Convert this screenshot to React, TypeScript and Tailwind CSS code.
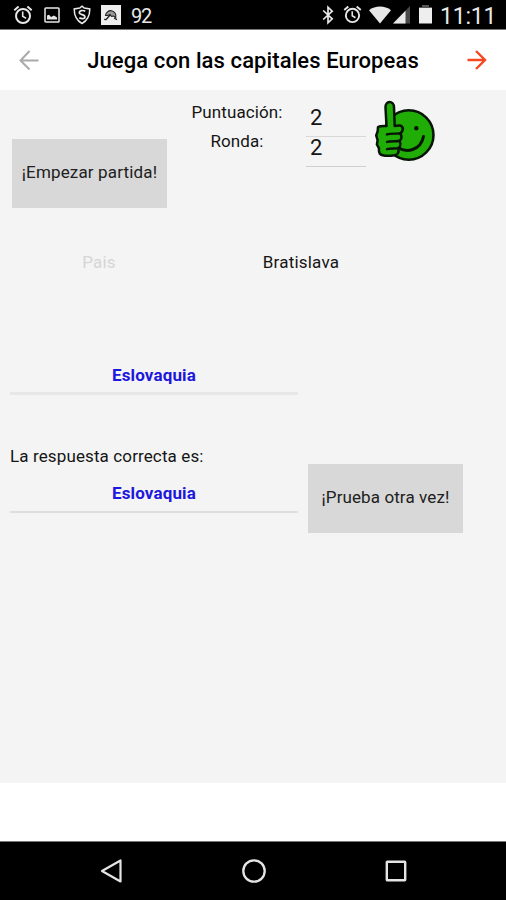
import type { ReactNode } from "react";

function AlarmIcon({ className }: { className: string }) {
  return (
    <svg viewBox="0 0 20 20" className={className} fill="none" stroke="currentColor">
      <circle cx="10" cy="11" r="7" strokeWidth="2" />
      <path d="M1.3 5.2 5.6 1.6M14.4 1.6l4.3 3.6" strokeWidth="2" />
      <path d="M9.7 6.5v4.8l3.4 2.1" strokeWidth="1.6" />
    </svg>
  );
}

function StatusBar() {
  return (
    <div className="flex h-[30px] items-center border-b border-[#777] bg-black text-[#e8e8e8]">
      <AlarmIcon className="ml-[13px] h-5 w-5 shrink-0" />
      <svg viewBox="0 0 16 16" className="ml-[11px] h-4 w-4 shrink-0" fill="none" stroke="currentColor">
        <rect x="1" y="1" width="14" height="14" rx="0.8" strokeWidth="1.5" />
        <path d="M3 12.5V8.5l2-.7 2 2.2 3-1.5 3 2v2z" fill="currentColor" stroke="none" />
      </svg>
      <svg viewBox="0 0 18 20" className="ml-[13px] h-5 w-[18px] shrink-0" fill="none" stroke="currentColor" strokeWidth="1.5">
        <path d="M9 1.2 11.3 3 16.8 4c0 6.8-2.3 11.5-7.8 14.5C3.5 15.5 1.2 10.8 1.2 4L6.7 3Z" />
        <path d="M12.3 6.3C9.5 4.8 6.3 5.6 6.3 7.5c0 2.5 5.7 1.8 5.7 4.4 0 1.9-3.2 2.4-5.7.8" strokeWidth="1.7" />
      </svg>
      <svg viewBox="0 0 20 20" className="ml-[10px] h-5 w-5 shrink-0">
        <rect width="20" height="20" fill="#eeeeee" />
        <path d="M4.5 10.5C4.8 7.5 7.5 5.3 10.5 5.7c3.3.5 5 3.8 4.3 7.1L12.6 11l-2 .4-1.8-1.7-2.1.8Z" fill="#999" stroke="#222" strokeWidth="1.1" />
        <path d="m9.5 9.5-4.2 4.7c-.7.8-1.7.4-1.6-.5M13 13l3 1.7" fill="none" stroke="#222" strokeWidth="1.3" />
      </svg>
      <span className="ml-[10px] pt-[2px] text-[20px] leading-[28px] tracking-[-1.3px]">92</span>

      <svg viewBox="0 0 12 20" className="ml-auto h-5 w-3 shrink-0" fill="none" stroke="currentColor" strokeWidth="1.7">
        <path d="m1.2 5.5 9 8.3-4.200 4V2.2l4.200 4-9 8.3" />
      </svg>
      <AlarmIcon className="ml-[9px] h-[19px] w-[19px] shrink-0" />
      <svg viewBox="0 0 22 18" className="ml-[7px] h-[18px] w-[22px] shrink-0" fill="currentColor">
        <path d="M0 4.200C6-.8 16-.8 22 4.200L11 17.5Z" />
      </svg>
      <svg viewBox="0 0 17 18" className="ml-[2px] h-[18px] w-[17px] shrink-0">
        <path d="M17 0v17.5H0Z" fill="#484848" />
        <path d="M12.500 4.7v12.800H0Z" fill="#e8e8e8" />
      </svg>
      <svg viewBox="0 0 13 19" className="ml-[9px] h-[19px] w-[13px] shrink-0">
        <path d="M3 0h7v2h3v5H0V2h3z" fill="#555" />
        <path d="M0 3h13v15.500H0z" fill="#eeeeee" />
      </svg>
      <span className="mr-[9px] ml-[8px] w-[57px] pt-[4px] text-[23px] leading-[26px] tracking-[-0.2px] whitespace-nowrap">11:11</span>
    </div>
  );
}

function ThumbSmiley() {
  return (
    <svg viewBox="0 0 62 62" className="mt-[10px] ml-[8px] h-[62px] w-[62px] shrink-0" fill="#20ad05" stroke="#071507" strokeLinecap="round" strokeLinejoin="round">
      <circle cx="34.8" cy="35" r="24.700" strokeWidth="2.500" />
      <circle cx="42.300" cy="28.300" r="2.200" fill="#071507" stroke="none" />
      <circle cx="28.300" cy="28.500" r="1.800" fill="#071507" stroke="none" />
      <path d="M24 47.500C32 53 46.500 51 49.500 36.500" fill="none" strokeWidth="3" />
      <path d="M12.500 26 11.500 7.500C11 .3 20 .3 20 7.500L20.700 26l4-.4c3.300-.1 4.100 1.600 4 3.700-.2 2.200-1.200 3.300-2.700 4 2.200 2.400 2 6-.6 7.600 1.700 2.800 1.100 5.800-1.200 7.400 1.200 4.300-.7 7.400-5.400 7.300-4.600.2-10.500 1-13-2-.9-1.400-1-3.400-.9-5.400L2.900 44.500l.7-4.300L2.200 35.500l1.500-4.300.3-4.200c2-1.200 5.300-1 8.500-1Z" strokeWidth="2.500" />
      <path d="M12.800 34.500c3.700-1.200 8.500-.6 13.200-1M13 41.900c3.700-1 8-.5 12.200-.9M13 49.200c3.500-1 7.200-.4 11-.8" fill="none" strokeWidth="2.400" />
    </svg>
  );
}

function GameButton({ className, children }: { className: string; children: ReactNode }) {
  return (
    <button className={`h-[69px] w-[155px] shrink-0 bg-[#d8d8d8] pb-px text-center whitespace-nowrap text-[#202020] ${className}`}>
      {children}
    </button>
  );
}

export default function App() {
  return (
    <div className="flex h-[900px] w-[506px] flex-col overflow-hidden bg-white font-['Roboto',sans-serif] text-[#151515]">
      <StatusBar />

      <header className="flex h-[60px] shrink-0 items-center justify-between px-[19px]">
        <svg viewBox="0 0 20 20" className="h-5 w-5" fill="none" stroke="#aaaaaa" strokeWidth="2">
          <path d="M19.500 10.500H1.500M10.500 1 1.500 10.500l9 9" />
        </svg>
        <h1 className="text-[22px] font-medium tracking-[0.1px] whitespace-nowrap text-black">Juega con las capitales Europeas</h1>
        <svg viewBox="0 0 20 20" className="h-5 w-5" fill="none" stroke="#f44722" strokeWidth="2.400">
          <path d="M.5 10h17.500M9 1l9 9-9 9" />
        </svg>
      </header>

      <main className="flex h-[693px] shrink-0 flex-col bg-[#f4f4f4]">
        <section className="flex h-[118px] items-start pl-[12px]">
          <GameButton className="mt-[49px] text-[17px] tracking-[0.15px]">¡Empezar partida!</GameButton>
          <div className="ml-[14px] w-[112px] pt-[7px] text-center text-[17px] leading-[30px] tracking-[0.1px]">
            <p>Puntuación:</p>
            <p className="leading-[29px]">Ronda:</p>
          </div>
          <div className="ml-[13px] w-[60px] pt-[7px] text-[22px]">
            <p className="h-[40px] border-b border-[#d8d8d8] pl-[4px] leading-[42px]">2</p>
            <p className="h-[30px] border-b border-[#d0d0d0] pl-[4px] leading-[22px]">2</p>
          </div>
          <ThumbSmiley />
        </section>

        <section className="mt-[39px] flex h-[30px] text-[17px] leading-[30px]">
          <p className="ml-[10px] w-[178px] text-center tracking-[0.2px] text-[#d6d6d6]">Pais</p>
          <p className="ml-[24px] w-[178px] text-center tracking-[0.2px]">Bratislava</p>
        </section>

        <p className="mt-[79px] ml-[10px] h-[39px] w-[288px] border-b-[3px] border-[#e7e7e7] text-center text-[17px] leading-[38px] font-bold tracking-[0.15px] text-[#1e17dc]">
          Eslovaquia
        </p>

        <section className="mt-[44px] flex items-start pl-[10px]">
          <div className="w-[288px]">
            <p className="h-[34px] text-[17px] leading-[35px] tracking-[0.12px]">La respuesta correcta es:</p>
            <p className="h-[40px] border-b-2 border-[#dedede] text-center text-[17px] leading-[40px] font-bold tracking-[0.15px] text-[#1e17dc]">
              Eslovaquia
            </p>
          </div>
          <GameButton className="mt-[25px] ml-[10px] text-[17px] tracking-[0.1px]">¡Prueba otra vez!</GameButton>
        </section>
      </main>

      <div className="h-[58px] shrink-0 bg-white" />

      <nav className="flex h-[59px] shrink-0 items-center justify-between border-t border-[#777] bg-black pr-[98px] pl-[100px] text-[#e5e5e5]">
        <svg viewBox="0 0 24 24" className="h-6 w-6" fill="none" stroke="currentColor" strokeWidth="2.200" strokeLinejoin="round">
          <path d="M2 12 20.500 1.500v21Z" />
        </svg>
        <svg viewBox="0 0 24 24" className="h-6 w-6" fill="none" stroke="currentColor" strokeWidth="2.300">
          <circle cx="12" cy="12" r="10.700" />
        </svg>
        <svg viewBox="0 0 24 24" className="h-6 w-6" fill="none" stroke="currentColor" strokeWidth="2.400">
          <rect x="2.800" y="2.800" width="18.400" height="18.400" rx="0.500" />
        </svg>
      </nav>
    </div>
  );
}
